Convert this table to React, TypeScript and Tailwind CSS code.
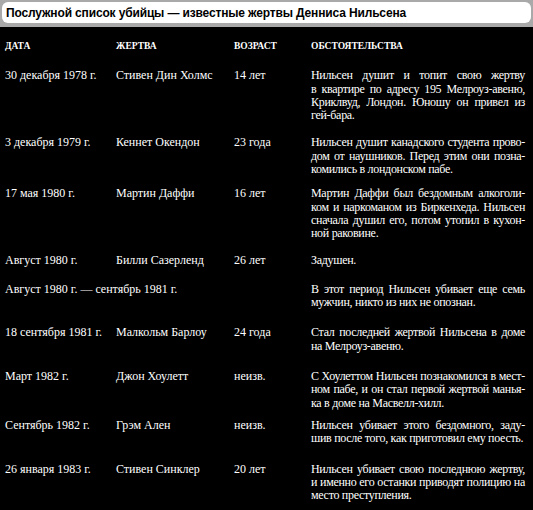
type Victim = {
  date: string;
  name: string;
  age: string;
  lines: string[];
  gap: string;
  wide?: boolean;
};

const victims: Victim[] = [
  {
    date: "30 декабря 1978 г.",
    name: "Стивен Дин Холмс",
    age: "14 лет",
    lines: [
      "Нильсен душит и топит свою жертву",
      "в квартире по адресу 195 Мелроуз-авеню,",
      "Криклвуд, Лондон. Юношу он привел из",
      "гей-бара.",
    ],
    gap: "mt-[16px]",
  },
  {
    date: "3 декабря 1979 г.",
    name: "Кеннет Окендон",
    age: "23 года",
    lines: [
      "Нильсен душит канадского студента прово-",
      "дом от наушников. Перед этим они позна-",
      "комились в лондонском пабе.",
    ],
    gap: "mt-[14px]",
  },
  {
    date: "17 мая 1980 г.",
    name: "Мартин Даффи",
    age: "16 лет",
    lines: [
      "Мартин Даффи был бездомным алкоголи-",
      "ком и наркоманом из Биркенхеда. Нильсен",
      "сначала душил его, потом утопил в кухон-",
      "ной раковине.",
    ],
    gap: "mt-[11px]",
  },
  {
    date: "Август 1980 г.",
    name: "Билли Сазерленд",
    age: "26 лет",
    lines: ["Задушен."],
    gap: "mt-[13px]",
  },
  {
    date: "Август 1980 г. — сентябрь 1981 г.",
    name: "",
    age: "",
    lines: [
      "В этот период Нильсен убивает еще семь",
      "мужчин, никто из них не опознан.",
    ],
    gap: "mt-[16px]",
    wide: true,
  },
  {
    date: "18 сентября 1981 г.",
    name: "Малкольм Барлоу",
    age: "24 года",
    lines: [
      "Стал последней жертвой Нильсена в доме",
      "на Мелроуз-авеню.",
    ],
    gap: "mt-[17px]",
  },
  {
    date: "Март 1982 г.",
    name: "Джон Хоулетт",
    age: "неизв.",
    lines: [
      "С Хоулеттом Нильсен познакомился в мест-",
      "ном пабе, и он стал первой жертвой манья-",
      "ка в доме на Масвелл-хилл.",
    ],
    gap: "mt-[17px]",
  },
  {
    date: "Сентябрь 1982 г.",
    name: "Грэм Ален",
    age: "неизв.",
    lines: [
      "Нильсен убивает этого бездомного, заду-",
      "шив после того, как приготовил ему поесть.",
    ],
    gap: "mt-[9px]",
  },
  {
    date: "26 января 1983 г.",
    name: "Стивен Синклер",
    age: "20 лет",
    lines: [
      "Нильсен убивает свою последнюю жертву,",
      "и именно его останки приводят полицию на",
      "место преступления.",
    ],
    gap: "mt-[17px]",
  },
];

export default function App() {
  return (
    <div className="w-[533px] h-[510px] bg-black overflow-hidden">
      {/* Title bar */}
      <div className="bg-[#a9a9a9] px-[2px] pt-[2px] pb-[4px]">
        <div className="h-[21px] rounded-[6px] bg-white flex items-center px-[4px]">
          <span className="font-['Liberation_Sans',Arial,sans-serif] font-bold text-[12px] tracking-[-0.15px] text-black leading-none">
            Послужной список убийцы — известные жертвы Денниса Нильсена
          </span>
        </div>
      </div>

      <div className="font-['Liberation_Serif','Times_New_Roman',serif] text-white text-[12px] leading-[13.3px] pl-[5px] pr-[8px] pt-[13px]">
        {/* Column headings */}
        <div className="flex font-bold text-[9.5px] uppercase">
          <div className="w-[111px] shrink-0">Дата</div>
          <div className="w-[118px] shrink-0">Жертва</div>
          <div className="w-[77px] shrink-0">Возраст</div>
          <div className="flex-1 min-w-0">Обстоятельства</div>
        </div>

        {victims.map((v) => (
          <div key={v.date} className={`flex ${v.gap}`}>
            {v.wide ? (
              <div className="w-[306px] shrink-0 whitespace-nowrap">{v.date}</div>
            ) : (
              <>
                <div className="w-[111px] shrink-0 whitespace-nowrap">{v.date}</div>
                <div className="w-[118px] shrink-0 whitespace-nowrap">{v.name}</div>
                <div className="w-[77px] shrink-0 whitespace-nowrap">{v.age}</div>
              </>
            )}
            <div className="flex-1 min-w-0 tracking-[-0.3px]">
              {v.lines.map((line, i) => (
                <div
                  key={i}
                  className={
                    i < v.lines.length - 1
                      ? "text-justify [text-align-last:justify] whitespace-nowrap"
                      : "whitespace-nowrap"
                  }
                >
                  {line}
                </div>
              ))}
            </div>
          </div>
        ))}
      </div>
    </div>
  );
}
